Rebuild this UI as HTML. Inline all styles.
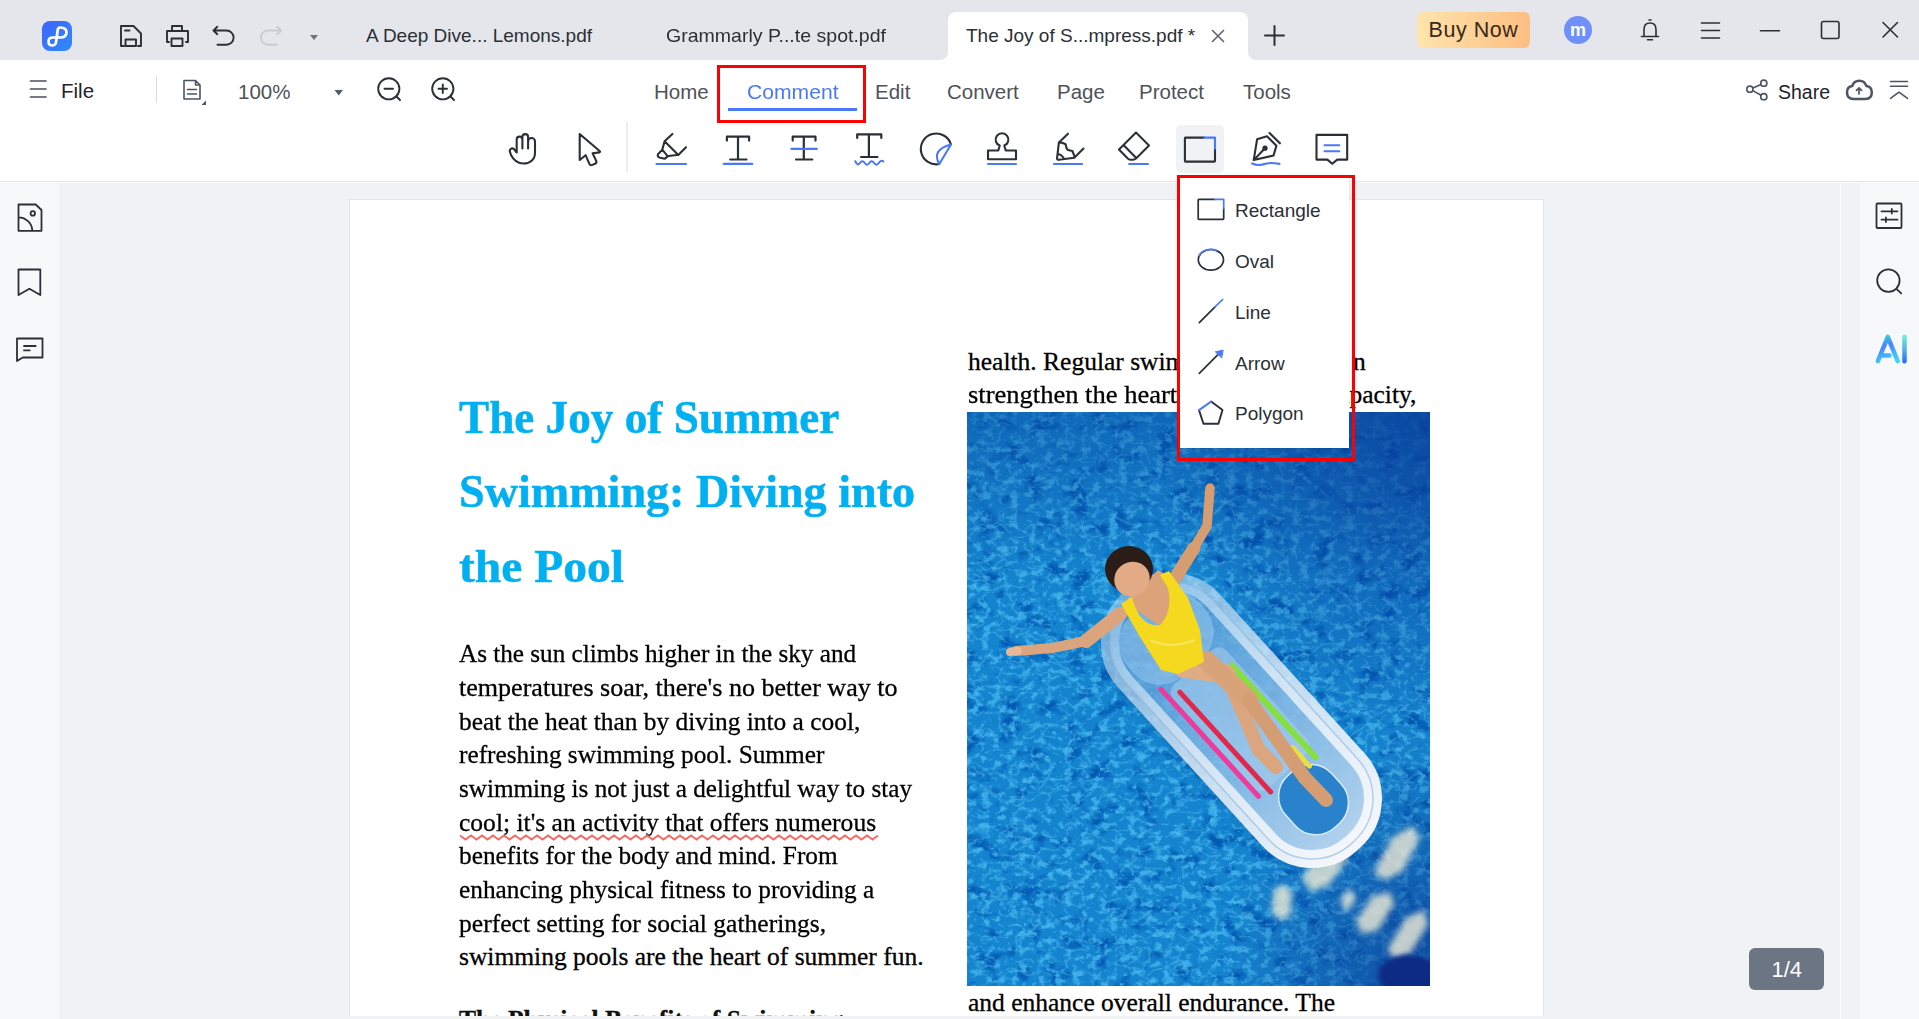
<!DOCTYPE html>
<html><head><meta charset="utf-8">
<style>
*{margin:0;padding:0;box-sizing:border-box}
html,body{width:1919px;height:1019px;overflow:hidden;background:#f1f2f4;font-family:"Liberation Sans",sans-serif;color:#2b2f36}
.a{position:absolute}
.t{position:absolute;white-space:nowrap;line-height:1}
svg.i{position:absolute;overflow:visible;fill:none;stroke:#2b2f36;stroke-width:2;stroke-linecap:round;stroke-linejoin:round}
#titlebar{left:0;top:0;width:1919px;height:60px;background:#e4e6eb}
#tb2{left:0;top:60px;width:1919px;height:123px;background:#fff}
#tbline{left:0;top:181px;width:1919px;height:1px;background:#e3e4e7}
#lsb{left:0;top:183px;width:62px;height:836px;background:#f7f8fa;border-right:2px solid #eeeff1}
#rsb{left:1860px;top:183px;width:59px;height:836px;background:#f7f8fa}
#vline{left:1840px;top:183px;width:1px;height:836px;background:#f9fafb}
#page{left:349px;top:199px;width:1195px;height:818px;background:#fff;border:1px solid #e4e5ea;border-bottom:none}
.tabtxt{font-size:19px;color:#2b2f36}
.nav{font-size:20.5px;color:#4f5257}
.doc{font-family:"Liberation Serif",serif;color:#000;-webkit-text-stroke:0.3px #000}
.body{font-size:25.5px}
.ttl{font-family:"Liberation Serif",serif;font-weight:bold;color:#00b0f0;font-size:46.3px;-webkit-text-stroke:0.5px #00b0f0}
.mi{font-size:19px;color:#2b2f36}
</style></head><body>
<div id="titlebar" class="a"></div>
<div id="tb2" class="a"></div>
<div id="tbline" class="a"></div>
<div id="lsb" class="a"></div>
<div id="rsb" class="a"></div>
<div id="vline" class="a"></div>
<div id="page" class="a"></div>

<!-- active tab -->
<div class="a" style="left:948px;top:12px;width:300px;height:48px;background:#fff;border-radius:8px 8px 0 0"></div>

<div class="a" style="left:940px;top:52px;width:8px;height:8px;background:#fff"></div>
<div class="a" style="left:932px;top:44px;width:16px;height:16px;background:#e4e6eb;border-radius:0 0 8px 0"></div>
<div class="a" style="left:1248px;top:52px;width:8px;height:8px;background:#fff"></div>
<div class="a" style="left:1248px;top:44px;width:16px;height:16px;background:#e4e6eb;border-radius:0 0 0 8px"></div>
<!-- tab texts -->
<div class="t tabtxt" style="left:366px;top:26.3px">A Deep Dive... Lemons.pdf</div>
<div class="t tabtxt" style="left:666px;top:26.3px;transform:scaleX(1.028);transform-origin:0 0">Grammarly P...te spot.pdf</div>
<div class="t tabtxt" style="left:966px;top:26.3px">The Joy of S...mpress.pdf *</div>

<!-- buy now -->
<div class="a" style="left:1417px;top:12px;width:113px;height:36px;border-radius:6px;background:linear-gradient(90deg,#fee4ad,#fdbe82)"></div>
<div class="t" style="left:1428.5px;top:20.3px;font-size:21.5px;letter-spacing:0.55px;color:#3b2a17">Buy Now</div>
<div class="a" style="left:1564px;top:16px;width:28px;height:28px;border-radius:50%;background:#6f8ffb"></div>
<div class="t" style="left:1570px;top:20.5px;font-size:18px;font-weight:bold;color:#fff">m</div>

<!-- row 2 -->
<div class="t" style="left:61px;top:81px;font-size:20.5px;color:#1f2329">File</div>
<div class="a" style="left:156px;top:76px;width:1px;height:27px;background:#d8dadd"></div>
<div class="t" style="left:238px;top:82px;font-size:20.5px;color:#4f5257">100%</div>

<div class="t nav" style="left:654px;top:82px">Home</div>
<div class="t nav" style="left:747px;top:82px;color:#4a79f7;transform:scaleX(1.03);transform-origin:0 0">Comment</div>
<div class="t nav" style="left:875px;top:82px">Edit</div>
<div class="t nav" style="left:947px;top:82px">Convert</div>
<div class="t nav" style="left:1057px;top:82px">Page</div>
<div class="t nav" style="left:1139px;top:82px">Protect</div>
<div class="t nav" style="left:1243px;top:82px">Tools</div>
<div class="a" style="left:728px;top:108px;width:129px;height:3px;background:#4a79f7"></div>
<div class="a" style="left:717px;top:65px;width:149px;height:58px;border:3px solid #ff0000"></div>
<div class="t" style="left:1778px;top:82.5px;font-size:19.5px;color:#1f2329">Share</div>


<div class="a" style="left:1176px;top:125px;width:48px;height:48px;border-radius:5px;background:#f1f2f4"></div>
<!-- ICONS (absolute coords) -->
<svg class="a" style="left:0;top:0" width="1919" height="1019" viewBox="0 0 1919 1019" fill="none" stroke="#2b2f36" stroke-width="2" stroke-linecap="round" stroke-linejoin="round">
 <!-- logo -->
 <defs>
  <linearGradient id="lg" x1="0" y1="0" x2="1" y2="1"><stop offset="0" stop-color="#3f63ff"/><stop offset="1" stop-color="#2f8cf5"/></linearGradient>
  <linearGradient id="aig" x1="0" y1="1" x2="1" y2="0"><stop offset="0" stop-color="#3fd0f5"/><stop offset=".5" stop-color="#3a8df7"/><stop offset="1" stop-color="#5be0d0"/></linearGradient>
 </defs>
 <rect x="42" y="21" width="30" height="30" rx="8" fill="url(#lg)" stroke="none"/>
 <path d="M60 27.5 Q66.5 27.5 66.5 32.5 Q66.5 37.5 60 37.5 L53 37.5 Q48.5 37.5 48.5 41.5 Q48.5 45.5 52.5 45.5 Q55.8 45.5 56.2 41 L57.8 29.5 Q58.2 27.5 60 27.5 Z" stroke="#fff" stroke-width="2.7"/>
 <!-- save -->
 <path d="M124 46 H121 V26 H133.5 L141 33.5 V46 H138 M125.5 46 V39.5 H136 V46 Z M125 30.5 H129.5" stroke-width="1.9"/>
 <!-- print -->
 <path d="M172 31 V26 H182 V31 M169 42 H167 V31 H188 V42 H186 M171.5 46 V38.5 H182.5 V46 Z" stroke-width="1.9"/>
 <!-- undo -->
 <path d="M217.3 26.8 L213.5 30.5 L217.3 34.2 M214 30.5 H226.5 A7.1 7.1 0 0 1 226.5 44.7 H217.5" stroke-width="1.9"/>
 <!-- redo -->
 <path d="M277.2 26.8 L281 30.5 L277.2 34.2 M280.5 30.5 H268 A7.1 7.1 0 0 0 268 44.7 H277" stroke="#c9ccd1" stroke-width="1.9"/>
 <path d="M310 35 H318 L314 40 Z" fill="#6b7280" stroke="none"/>
 <!-- tab close & plus -->
 <path d="M1212.5 30.5 L1223.5 41.5 M1223.5 30.5 L1212.5 41.5" stroke="#5f636b" stroke-width="1.6"/>
 <path d="M1274.5 26 V45 M1265 35.5 H1284" stroke-width="2"/>
 <!-- bell -->
 <path d="M1644 36.5 V29.5 Q1644 23 1650 23 Q1656 23 1656 29.5 V36.5 M1641.5 36.5 H1658.5 M1647.5 39.8 H1652.5 M1649 20 H1651" stroke-width="1.6"/>
 <!-- menu -->
 <path d="M1701.5 23 H1719.5 M1701.5 30.5 H1719.5 M1701.5 38 H1719.5" stroke-width="1.6"/>
 <path d="M1760.5 30.7 H1779.5" stroke-width="1.6"/>
 <rect x="1821.5" y="21.5" width="17.5" height="17" rx="2" stroke-width="1.6"/>
 <path d="M1883 22.5 L1897.5 37 M1897.5 22.5 L1883 37" stroke-width="1.6"/>

 <!-- row 2 -->
 <path d="M30.5 81 H46 M30.5 89 H46 M30.5 97 H46" stroke="#4b5058" stroke-width="1.7"/>
 <path d="M184 80.5 H195.5 L200 85 V99 H184 Z M195.5 80.5 V85 H200 M187.5 89.5 H196.5 M187.5 94 H196.5" stroke="#4b5563" stroke-width="1.6"/>
 <path d="M206 100.5 V105 H201.5 Z" fill="#4b5563" stroke="none"/>
 <path d="M334.5 90 H343 L338.75 95.5 Z" fill="#555b66" stroke="none"/>
 <circle cx="388.8" cy="88.8" r="10.6" stroke-width="1.9"/>
 <path d="M396.5 96.5 L400 100 M384.5 88.8 H393" stroke-width="1.9"/>
 <circle cx="442.8" cy="88.8" r="10.6" stroke-width="1.9"/>
 <path d="M450.5 96.5 L454 100 M438.5 88.8 H447 M442.8 84.5 V93" stroke-width="1.9"/>
 <!-- share -->
 <circle cx="1749.9" cy="89.2" r="3.1" stroke="#4b5563" stroke-width="1.6"/>
 <circle cx="1763.8" cy="83.2" r="3.1" stroke="#4b5563" stroke-width="1.6"/>
 <circle cx="1763.8" cy="96.7" r="3.1" stroke="#4b5563" stroke-width="1.6"/>
 <path d="M1752.8 88 L1761 84.5 M1752.8 90.6 L1761 95.3" stroke="#4b5563" stroke-width="1.6"/>
 <!-- cloud -->
 <path d="M1853.5 99 H1865.5 Q1871.8 99 1871.8 92.3 Q1871.8 86.8 1866.3 86 Q1864.8 80.8 1859.3 80.8 Q1853.8 80.8 1852.3 86 Q1847 86.8 1847 92.3 Q1847 99 1853.5 99 Z" stroke="#4b5563" stroke-width="2.5"/>
 <path d="M1859 94 V88 M1856.5 90.3 L1859 87.8 L1861.5 90.3" stroke="#4b5563" stroke-width="1.7"/>
 <!-- collapse -->
 <path d="M1890.5 81.5 H1907.5 M1890.5 86.3 H1907.5 M1890.5 98.3 L1899 92.2 L1907.5 98.3" stroke="#4b5563" stroke-width="1.6"/>

 <!-- row 3 tools -->
 <!-- hand -->
 <g transform="translate(500,125)">
  <path d="M22.4 23.5 V12 A2.85 2.85 0 0 1 28.1 12 V23.5 M16.7 27.5 V14.5 A2.85 2.85 0 0 1 22.4 14.5 M28.1 16.5 A3.45 3.45 0 0 1 35 16.5 V28 C35 34.5 30 38.5 23.5 38.5 C17.5 38.5 13.5 35 11 30 L10 27 C9 24.5 11.5 22.5 13.8 23.8 L16.7 27.5" stroke-width="2.1"/>
  <!-- cursor -->
  <path d="M79.7 9 V35 L85.6 30.2 L89.4 38.8 Q90.3 40.8 92.3 39.9 L95.1 38.7 Q97 37.8 96.2 35.9 L92.6 28.2 L99.5 27.4 Q100.6 26.9 99.6 26 Z" stroke-width="2.1"/>
 </g>
 <path d="M627 122 V172" stroke="#dcdde0" stroke-width="1"/>
 <g transform="translate(500,125)">
  <!-- highlighter -->
  <path d="M172.4 8.9 L164.6 16.3 L178.3 30 L186 22.2 M164.6 16.3 L162.3 24.6 L167.8 31.3 C171 30.8 175 29.6 178.3 30 M162.3 24.6 L158 29.3 Q157 31.5 159.5 32.5 L164.5 33.8 L167.8 31.3" stroke-width="2.1"/>
  <path d="M156.5 39 H186" stroke="#4a79f7" stroke-width="2.2"/>
 </g>
 <g transform="translate(710,125)">
  <path d="M16.9 15.6 V11.7 H39.1 V15.6 M28 11.7 V34.5 M20.2 34.5 H36.5" stroke-width="2.2"/>
  <path d="M13.7 38.8 H42.3" stroke="#4a79f7" stroke-width="2.2"/>
  <path d="M82.7 15.6 V11.7 H105.5 V15.6 M93.8 11.7 V34.5 M86 34.5 H102.3" stroke-width="2.2"/>
  <path d="M81.4 23.8 H106.8" stroke="#4a79f7" stroke-width="2.2"/>
  <path d="M147.2 13 V9.4 H171.3 V13 M158.9 9.4 V32 M151.1 32 H167.4" stroke-width="2.2"/>
  <path d="M145.3 36.3 Q147.6 41.4 150 38 Q152.3 34.6 154.7 38 Q157 41.4 159.4 38 Q161.7 34.6 164.1 38 Q166.4 41.4 168.8 38 Q171 34.6 173.3 36.3" stroke="#4a79f7" stroke-width="2.1"/>
  <path d="M241 19.5 A15.4 15.4 0 1 0 229.3 39" stroke-width="2.1"/>
  <path d="M241 19.5 L229.3 39 Q221 25 241 19.5" stroke="#4a79f7" stroke-width="2.1"/>
 </g>
 <g transform="translate(975,125)">
  <path d="M23.3 25.5 H13 V34.3 H41 V25.5 H30.7 L29.3 20.6 A6.4 6.4 0 1 0 24.7 20.6 Z" stroke-width="2.1"/>
  <path d="M13 39 H41" stroke="#4a79f7" stroke-width="2.2"/>
  <path d="M93 8.7 L83.9 17.4 L82 33.8 Q82.3 35 83.8 34.8 L99.3 32.8 L108.5 23.6 M83.9 17.4 L87.3 17.8 L90.6 19.3 L91.6 23.6 L93 25 L97.4 26 L99.3 30.9 V32.8 M83 29 Q87.5 30 88.8 33.6" stroke-width="2.1"/>
  <path d="M79 39 H107" stroke="#4a79f7" stroke-width="2.2"/>
  <path d="M161 7.5 L174 20.5 L161 33.5 Q159 35 157 34.8 L155.5 34.7 Q154 34.6 152.5 33.2 L144 24.5 Z M149 20.5 L161 32.8" stroke-width="2.1"/>
  <path d="M154.2 39 H173" stroke="#4a79f7" stroke-width="2.2"/>
 </g>
 <g transform="translate(1170,120)">
  <path d="M34.2 17.6 H15.4 Q14.9 17.6 14.9 18.4 V40.8 Q14.9 41.6 15.7 41.6 H44.2 Q45 41.6 45 40.8 V28.7" stroke-width="2.1"/>
  <path d="M34.2 17.6 H45 V28.7" stroke="#4a79f7" stroke-width="2.1"/>
  <path d="M83.7 40.1 L87.1 19.3 L97 16.3 L106.4 25.7 L103.5 35.6 Z M99.5 12.9 L109.9 23.3 M83.7 40.1 L95 28.2" stroke-width="2.1"/>
  <circle cx="95" cy="28.2" r="2.6" fill="#2b2f36" stroke="none"/>
  <path d="M82.2 43.6 Q87 45.8 92 44.6 Q97 43 101 43 Q105 43 109.4 43.8" stroke="#4a79f7" stroke-width="2.2"/>
  <path d="M157.4 39.6 H146.5 V14.9 H177.2 V39.6 H167.3 L162.2 43.8 Z" stroke-width="2.1"/>
  <path d="M154.5 25.2 H169.3 M154.5 31.2 H169.3" stroke="#4a79f7" stroke-width="2.1"/>
 </g>

 <!-- left sidebar -->
 <path d="M18.5 204.5 H35.7 L41.5 210 V230.8 H18.5 Z M18.5 217.3 A14 13.5 0 0 1 32.3 230.8" stroke-width="1.8"/>
 <circle cx="32.8" cy="213.4" r="2.2" stroke-width="1.8"/>
 <path d="M18.5 269.5 H40.3 V295 L29.4 288.8 L18.5 295 Z" stroke-width="1.8"/>
 <path d="M22.8 357.5 H42.5 V338.5 H17 V361 Z M24 346 H35.7 M24 350.4 H29.7" stroke-width="1.8"/>

 <!-- right sidebar -->
 <rect x="1876.5" y="203.5" width="25" height="24.5" rx="1" stroke-width="1.8"/>
 <path d="M1881.5 211.3 H1897.5 M1881.5 219.7 H1897.5 M1891.8 209 V213.6 M1885.9 217.4 V222" stroke-width="1.8"/>
 <circle cx="1888.4" cy="280.6" r="11.2" stroke-width="1.8"/>
 <path d="M1896.5 288.8 L1901.2 293.3" stroke-width="1.8"/>
 <defs>
  <linearGradient id="aiA" gradientUnits="userSpaceOnUse" x1="1880" y1="336" x2="1890" y2="362"><stop offset="0" stop-color="#2ee3cf"/><stop offset=".4" stop-color="#4a84ff"/><stop offset="1" stop-color="#3ad6ff"/></linearGradient>
  <linearGradient id="aiI" gradientUnits="userSpaceOnUse" x1="0" y1="336" x2="0" y2="362"><stop offset="0" stop-color="#6ef0d8"/><stop offset=".6" stop-color="#4aa8e8"/><stop offset="1" stop-color="#2a6cff"/></linearGradient>
 </defs>
 <path d="M1877.9 361.2 L1887.8 336.8 L1897.7 361.2 M1882.4 355.6 H1889.4" stroke="url(#aiA)" stroke-width="4.5" stroke-linecap="round" stroke-linejoin="round"/>
 <path d="M1904.5 336.8 V361.2" stroke="url(#aiI)" stroke-width="4.5" stroke-linecap="round"/>
</svg>


<!-- page count -->
<div class="a" style="left:1749px;top:948px;width:75px;height:42px;border-radius:6px;background:#6b7584"></div>
<div class="t" style="left:1771.5px;top:958.5px;font-size:22px;color:#fff">1/4</div>

<!-- DOC -->
<div class="t ttl" style="left:459px;top:394.6px;transform:scaleX(0.976);transform-origin:0 0">The Joy of Summer</div>
<div class="t ttl" style="left:459px;top:469.4px;transform:scaleX(0.996);transform-origin:0 0">Swimming: Diving into</div>
<div class="t ttl" style="left:459px;top:544.2px;transform:scaleX(1.026);transform-origin:0 0">the Pool</div>
<div class="t doc body" style="left:459px;top:641.1px;transform:scaleX(0.987);transform-origin:0 0">As the sun climbs higher in the sky and</div>
<div class="t doc body" style="left:459px;top:674.8px;transform:scaleX(1.022);transform-origin:0 0">temperatures soar, there's no better way to</div>
<div class="t doc body" style="left:459px;top:708.5px;transform:scaleX(0.996);transform-origin:0 0">beat the heat than by diving into a cool,</div>
<div class="t doc body" style="left:459px;top:742.2px;transform:scaleX(0.992);transform-origin:0 0">refreshing swimming pool. Summer</div>
<div class="t doc body" style="left:459px;top:775.9px;transform:scaleX(0.987);transform-origin:0 0">swimming is not just a delightful way to stay</div>
<div class="t doc body" style="left:459px;top:809.6px;transform:scaleX(1.002);transform-origin:0 0">cool; it's an activity that offers numerous</div>
<div class="t doc body" style="left:459px;top:843.3px;transform:scaleX(0.992);transform-origin:0 0">benefits for the body and mind. From</div>
<div class="t doc body" style="left:459px;top:877.0px;transform:scaleX(0.992);transform-origin:0 0">enhancing physical fitness to providing a</div>
<div class="t doc body" style="left:459px;top:910.7px;transform:scaleX(1.003);transform-origin:0 0">perfect setting for social gatherings,</div>
<div class="t doc body" style="left:459px;top:944.4px">swimming pools are the heart of summer fun.</div>
<svg class="a" style="left:0;top:0" width="1919" height="1019" viewBox="0 0 1919 1019"><path d="M460 835.5 l5.5 4 l5.5 -4 l5.5 4 l5.5 -4 l5.5 4 l5.5 -4 l5.5 4 l5.5 -4 l5.5 4 l5.5 -4 l5.5 4 l5.5 -4 l5.5 4 l5.5 -4 l5.5 4 l5.5 -4 l5.5 4 l5.5 -4 l5.5 4 l5.5 -4 l5.5 4 l5.5 -4 l5.5 4 l5.5 -4 l5.5 4 l5.5 -4 l5.5 4 l5.5 -4 l5.5 4 l5.5 -4 l5.5 4 l5.5 -4 l5.5 4 l5.5 -4 l5.5 4 l5.5 -4 l5.5 4 l5.5 -4 l5.5 4 l5.5 -4 l5.5 4 l5.5 -4 l5.5 4 l5.5 -4 l5.5 4 l5.5 -4 l5.5 4 l5.5 -4 l5.5 4 l5.5 -4 l5.5 4 l5.5 -4 l5.5 4 l5.5 -4 l5.5 4 l5.5 -4 l5.5 4 l5.5 -4 l5.5 4 l5.5 -4 l5.5 4 l5.5 -4 l5.5 4 l5.5 -4 l5.5 4 l5.5 -4 l5.5 4 l5.5 -4 l5.5 4 l5.5 -4 l5.5 4 l5.5 -4 l5.5 4 l5.5 -4 l5.5 4 l5.5 -4" fill="none" stroke="#f46a66" stroke-width="1.9" stroke-linejoin="miter"/></svg>
<div class="t doc" style="left:459px;top:1006.9px;font-size:25.5px;font-weight:bold;color:#111">The Physical Benefits of Swimming</div>
<div class="t doc body" style="left:968px;top:349.4px">health. Regular swimming can</div>
<div class="t doc body" id="r1" style="left:1353px;top:349.4px">n</div>
<div class="t doc body" style="left:968px;top:382.3px;transform:scaleX(1.04);transform-origin:0 0">strengthen the heart</div>
<div class="t doc body" id="r2" style="left:1326.8px;top:382.3px">capacity,</div>
<div class="t doc body" style="left:968px;top:990.3px">and enhance overall endurance. The</div>

<!-- image -->
<svg class="a" style="left:967px;top:412px" width="463" height="574" viewBox="967 412 463 574" preserveAspectRatio="none">
 <defs>
  <clipPath id="pc"><rect x="967" y="412" width="463" height="574"/></clipPath>
  <filter id="water" x="0" y="0" width="100%" height="100%" filterUnits="objectBoundingBox">
   <feTurbulence type="fractalNoise" baseFrequency="0.11 0.13" numOctaves="4" seed="11" result="n"/>
   <feColorMatrix in="n" type="matrix" values="0 0 0 0 0  0 0 0 0 0  0 0 0 0 0  5 0 0 0 -2.6" result="a"/>
   <feFlood flood-color="#42b4ec" result="c"/>
   <feComposite in="c" in2="a" operator="in"/>
  </filter>
  <filter id="water3" x="0" y="0" width="100%" height="100%" filterUnits="objectBoundingBox">
   <feTurbulence type="turbulence" baseFrequency="0.06 0.08" numOctaves="2" seed="21" result="n"/>
   <feColorMatrix in="n" type="matrix" values="0 0 0 0 0  0 0 0 0 0  0 0 0 0 0  -6 0 0 0 0.9" result="a"/>
   <feFlood flood-color="#5cc8f2" result="c"/>
   <feComposite in="c" in2="a" operator="in"/>
  </filter>
  <filter id="water2" x="0" y="0" width="100%" height="100%" filterUnits="objectBoundingBox">
   <feTurbulence type="fractalNoise" baseFrequency="0.045 0.06" numOctaves="3" seed="5" result="n"/>
   <feColorMatrix in="n" type="matrix" values="0 0 0 0 0  0 0 0 0 0  0 0 0 0 0  -4 0 0 0 1.9" result="a"/>
   <feFlood flood-color="#0656b0" result="c"/>
   <feComposite in="c" in2="a" operator="in"/>
  </filter>
  <linearGradient id="topd" x1="0" y1="0" x2="0" y2="1"><stop offset="0" stop-color="#07449c" stop-opacity=".45"/><stop offset=".3" stop-color="#07449c" stop-opacity="0"/></linearGradient>
  <radialGradient id="tr" cx="1" cy="0" r="0.6"><stop offset="0" stop-color="#083c98" stop-opacity=".75"/><stop offset="1" stop-color="#083c98" stop-opacity="0"/></radialGradient>
  <radialGradient id="br" cx="1" cy="1" r="0.45"><stop offset="0" stop-color="#0a2f8a" stop-opacity=".7"/><stop offset="1" stop-color="#0a2f8a" stop-opacity="0"/></radialGradient>
  <linearGradient id="rim" x1="0" y1="0" x2="1" y2="0"><stop offset="0" stop-color="#d6e8f7" stop-opacity=".45"/><stop offset=".45" stop-color="#e4eef8" stop-opacity=".8"/><stop offset="1" stop-color="#f3f7fc" stop-opacity="1"/></linearGradient>
  <linearGradient id="body" x1="0" y1="0" x2="1" y2="0"><stop offset="0" stop-color="#6aaee6" stop-opacity=".55"/><stop offset=".5" stop-color="#8cc0ea" stop-opacity=".8"/><stop offset="1" stop-color="#b5d3ee"/></linearGradient>
  <filter id="b1"><feGaussianBlur stdDeviation="1"/></filter>
  <filter id="b2"><feGaussianBlur stdDeviation="2"/></filter>
  <filter id="b4"><feGaussianBlur stdDeviation="4"/></filter>
 </defs>
 <g clip-path="url(#pc)">
  <rect x="967" y="412" width="463" height="574" fill="#1584cf"/>
  <rect x="967" y="412" width="463" height="574" fill="#000" filter="url(#water2)" opacity=".9"/>
  <rect x="967" y="412" width="463" height="574" fill="none" filter="url(#water)" opacity=".85"/>
  <rect x="967" y="412" width="463" height="574" fill="none" filter="url(#water3)" opacity=".55"/>
  <rect x="967" y="412" width="463" height="574" fill="url(#topd)"/>
  <rect x="967" y="412" width="463" height="574" fill="url(#tr)"/>
  <rect x="967" y="412" width="463" height="574" fill="url(#br)"/>
  <!-- reflections -->
  <filter id="b3"><feGaussianBlur stdDeviation="3"/></filter>
  <g fill="#f4eed6" opacity=".78" filter="url(#b3)">
   <path d="M1302 878 L1318 852 L1340 846 L1348 858 L1330 884 L1312 892 Z"/>
   <path d="M1356 922 L1372 896 L1390 892 L1394 904 L1378 930 L1362 934 Z"/>
   <path d="M1388 948 L1406 918 L1424 910 L1428 924 L1410 954 L1394 960 Z"/>
   <path d="M1374 872 L1392 838 L1412 826 L1420 838 L1402 872 L1384 880 Z"/>
   <path d="M1274 890 Q1284 880 1292 892 L1290 916 Q1280 924 1272 912 Z"/>
   <path d="M1340 900 L1350 888 L1356 900 L1346 912 Z"/>
  </g>
  <ellipse cx="1408" cy="975" rx="30" ry="20" fill="#0a2a85" filter="url(#b2)"/>
  <!-- float -->
  <g transform="translate(1241.5 720.5) rotate(47.7)">
   <rect x="-165" y="-60" width="330" height="120" rx="58" fill="#0b4f9a" opacity=".35" transform="translate(0 10)" filter="url(#b4)"/>
   <rect x="-165" y="-60" width="330" height="120" rx="58" fill="url(#body)"/>
   <rect x="-165" y="-60" width="330" height="120" rx="58" fill="none" stroke="url(#rim)" stroke-width="18"/>
   <rect x="-165" y="-60" width="330" height="120" rx="58" fill="none" stroke="#8fb4d8" stroke-width="1.5" opacity=".6"/>
   <rect x="-152" y="-48" width="80" height="96" rx="36" fill="#b9dcf6" opacity=".35"/>
   <rect x="-72" y="-36" width="140" height="72" rx="10" fill="#a9cdec" opacity=".55"/>
   <rect x="72" y="-34" width="70" height="62" rx="28" fill="#2a82cc" stroke="#d8ecf8" stroke-width="1.5" transform="translate(0 3)"/>
   <rect x="-80" y="36" width="150" height="5" rx="2.5" fill="#ef3a9c"/>
   <rect x="-65" y="24" width="140" height="5" rx="2.5" fill="#e2274e"/>
   <rect x="-50" y="-33" width="130" height="6" rx="3" fill="#86e03c"/>
   <rect x="52" y="-22" width="30" height="5" rx="2.5" fill="#e9e040"/>
  </g>
  <!-- woman -->
  <g stroke-linecap="round" stroke-linejoin="round" fill="none">
   <path d="M1120 614 L1086 641" stroke="#dba47c" stroke-width="14"/>
   <path d="M1086 641 L1052 648 L1016 651" stroke="#dba47c" stroke-width="10"/>
   <path d="M1018 651 L1010 652" stroke="#e7b996" stroke-width="8"/>
   <path d="M1174 580 L1194 548" stroke="#d69c72" stroke-width="13"/>
   <path d="M1194 548 L1207 526 L1210 488" stroke="#d69c72" stroke-width="9.5"/>
   <path d="M1183 668 L1226 674" stroke="#e0ac86" stroke-width="19"/>
   <path d="M1226 674 L1259 750 L1276 767" stroke="#dba67f" stroke-width="14"/>
   <path d="M1206 660 L1249 700" stroke="#d9a37a" stroke-width="19"/>
   <path d="M1249 700 L1305 778 L1326 800" stroke="#d49d74" stroke-width="14"/>
  </g>
  <path d="M1124 602 L1158 570 L1178 582 L1166 630 Z" fill="#dca37b"/>
  <path d="M1121 604 L1132 597 Q1140 628 1160 625 Q1173 612 1168 588 L1160 575 L1169 571 L1188 598 L1200 630 L1204 662 L1178 674 L1161 670 L1140 637 Z" fill="#f5d91e"/>
  <path d="M1150 640 Q1170 650 1195 640" stroke="#fbe97a" stroke-width="2" fill="none" opacity=".7"/>
  <ellipse cx="1129" cy="569" rx="24" ry="23" fill="#2a1c16"/>
  <ellipse cx="1132" cy="579" rx="18" ry="17" fill="#e2ab85" transform="rotate(-30 1132 579)"/>
 </g>
</svg>

<!-- page bottom gray strip -->
<div class="a" style="left:62px;top:1016px;width:1778px;height:3px;background:#f1f2f4"></div>

<!-- dropdown menu -->
<div class="a" style="left:1177px;top:174px;width:172px;height:274px;background:#fff;box-shadow:0 1px 3px rgba(0,0,0,.10)"></div>
<div class="a" style="left:1177px;top:175px;width:178px;height:286px;border:3px solid #ff0000"></div>
<svg class="a" style="left:0;top:0" width="1919" height="1019" viewBox="0 0 1919 1019" fill="none" stroke="#2b2f36" stroke-width="1.7" stroke-linecap="round" stroke-linejoin="round">
 <path d="M1214.5 199.3 H1198.8 Q1198.2 199.3 1198.2 200 V218.6 Q1198.2 219.3 1198.9 219.3 H1223 Q1223.7 219.3 1223.7 218.6 V208.5"/>
 <path d="M1214.5 199.3 H1223.7 V208.5" stroke="#4a79f7"/>
 <ellipse cx="1210.9" cy="259.8" rx="12.6" ry="10.3"/>
 <path d="M1199.2 255.5 A12.6 10.3 0 0 1 1216.5 250.6" stroke="#4a79f7"/>
 <path d="M1199.3 322.6 L1215 306.8"/>
 <path d="M1215 306.8 L1222.6 299.5" stroke="#4a79f7"/>
 <path d="M1199.3 373.3 L1219.4 353.2"/>
 <path d="M1222.8 350.3 L1215.3 351.8 L1221.4 357.8 Z" fill="#4a79f7" stroke="#4a79f7" stroke-width="1"/>
 <path d="M1211.1 401.6 L1222.5 410.1 L1218.4 423.8 H1203.5 L1199 410.1" stroke-width="1.9"/>
 <path d="M1199 410.1 L1211.1 401.6" stroke="#4a79f7" stroke-width="1.9"/>
</svg>
<div class="t mi" style="left:1235px;top:201px">Rectangle</div>
<div class="t mi" style="left:1235px;top:252px">Oval</div>
<div class="t mi" style="left:1235px;top:303px">Line</div>
<div class="t mi" style="left:1235px;top:354px">Arrow</div>
<div class="t mi" style="left:1235px;top:404px">Polygon</div>

</body></html>
